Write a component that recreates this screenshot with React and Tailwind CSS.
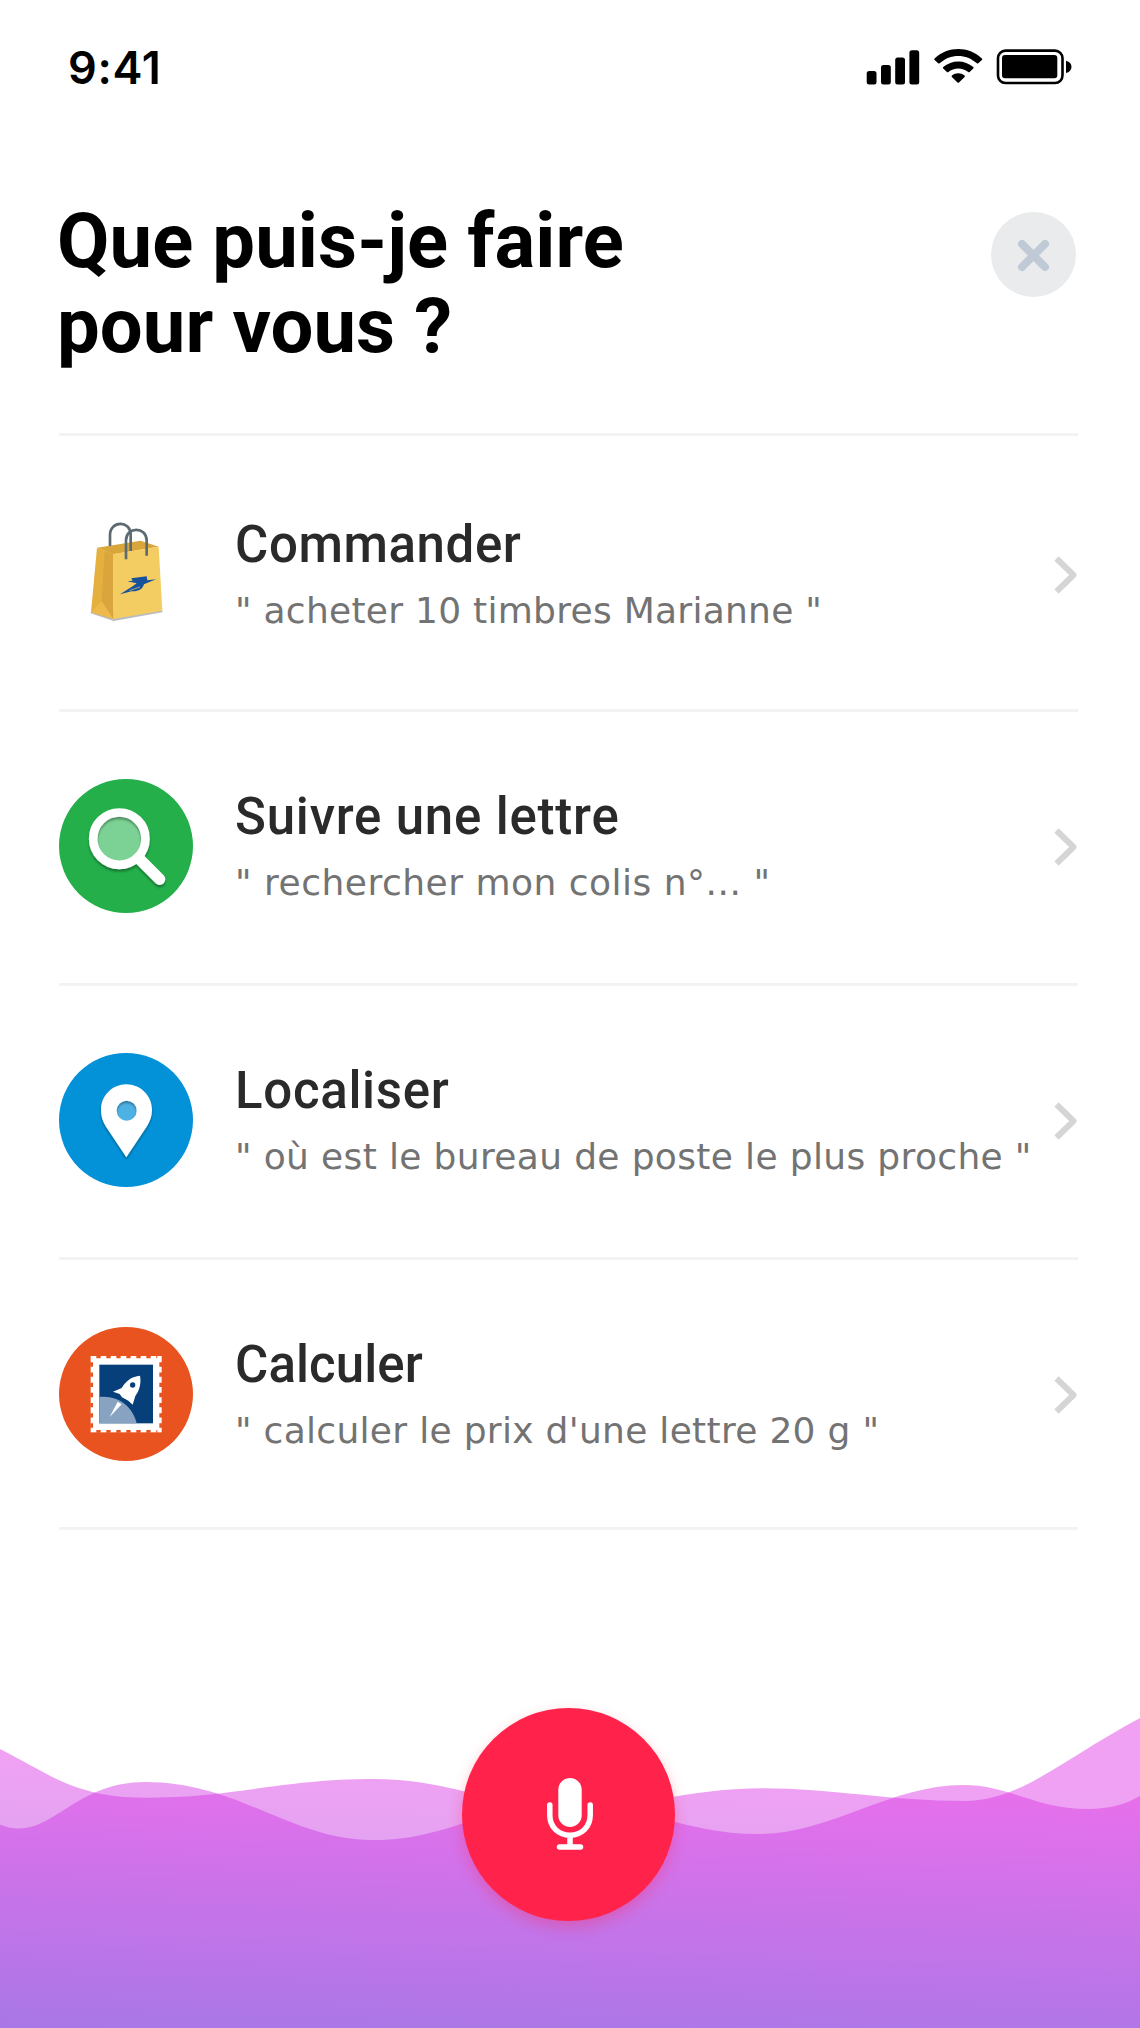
function BagIcon() {
  return (
    <svg viewBox="27 48 402 402" className="w-[134px] h-[134px] shrink-0" fill="none">
      <path d="M122 367L191 390L337 364V358L122 362Z" fill="#b9bcc0" />
      <path d="M141 170L272 149L326 167L190 190Z" fill="#d9a63c" />
      <path d="M180 165V132C180 88 242 88 242 130V180" stroke="#5c6a72" strokeWidth="8" />
      <path d="M141 170L190 189V384L123 364Z" fill="#e6b03f" />
      <path d="M164 180L190 189V384L155 331Z" fill="#d9a53c" />
      <path d="M123 364L155 331L190 384Z" fill="#ecb94a" />
      <path d="M190 189L326 167L337 359L190 384Z" fill="#f3cc62" />
      <path d="M228 205V148C228 106 290 106 290 148V194" stroke="#5c6a72" strokeWidth="8" />
      <path d="M244 262L290 256L292 268L318 265L282 280C278 294 266 302 245 301L210 310L248 286L260 277L232 271L248 269Z" fill="#17529b" />
      <path d="M238 299L270 288" stroke="#f3cc62" strokeWidth="2" />
    </svg>
  );
}

function SearchIcon() {
  return (
    <svg viewBox="27 27 402 402" className="w-[134px] h-[134px] shrink-0" fill="none">
      <defs>
        <filter id="lens-shadow" x="-20%" y="-20%" width="140%" height="140%">
          <feDropShadow dx="0" dy="7" stdDeviation="3" floodColor="#000" floodOpacity="0.35" />
        </filter>
      </defs>
      <circle cx="228" cy="228" r="201" fill="#24af4b" />
      <circle cx="208" cy="206" r="70" fill="#7cd295" />
      <g filter="url(#lens-shadow)" stroke="#fff">
        <circle cx="208" cy="206" r="78.5" strokeWidth="26" />
        <path d="M266 265L329 328" strokeWidth="34" strokeLinecap="round" />
      </g>
    </svg>
  );
}

function PinIcon() {
  return (
    <svg viewBox="27 38 402 402" className="w-[134px] h-[134px] shrink-0" fill="none">
      <defs>
        <filter id="pin-shadow" x="-20%" y="-20%" width="140%" height="140%">
          <feDropShadow dx="0" dy="6" stdDeviation="3" floodColor="#000" floodOpacity="0.35" />
        </filter>
      </defs>
      <circle cx="228" cy="239" r="201" fill="#0391d8" />
      <circle cx="230" cy="211" r="32" fill="#4db2e3" />
      <path
        filter="url(#pin-shadow)"
        fillRule="evenodd"
        fill="#fff"
        d="M229 132C271 132 306 166 306 208C306 228 300 243 290 259L229 351L168 259C158 243 153 228 153 208C153 166 187 132 229 132ZM230 181A30 30 0 1 0 230 241A30 30 0 1 0 230 181Z"
      />
    </svg>
  );
}

function StampIcon() {
  return (
    <svg viewBox="27 18 402 402" className="w-[134px] h-[134px] shrink-0" fill="none">
      <circle cx="228" cy="219" r="201" fill="#e8531f" />
      <rect x="122" y="105" width="213" height="229" fill="#fff" />
      {/* perforations */}
      <path d="M139 108H322M139 331H322" stroke="#e8531f" strokeWidth="8" strokeDasharray="13 17" />
      <path d="M125 124V322M332 124V322" stroke="#e8531f" strokeWidth="8" strokeDasharray="13 17.5" />
      <rect x="148" y="131" width="161" height="176" fill="#063f7a" />
      <path d="M148 228C205 222 248 257 260 307H148Z" fill="#88a3c2" />
      <path d="M270 164C245 166 228 180 215 201L189 212L209 219L216 229L235 239L248 251L256 225C269 207 274 186 270 164Z" fill="#fff" />
      <path d="M203 242L215 250L179 288Z" fill="#fff" />
      <circle cx="248" cy="192" r="8" fill="#063f7a" />
    </svg>
  );
}

const ACTIONS = [
  {
    title: "Commander",
    hint: '" acheter 10 timbres Marianne "',
    Icon: BagIcon,
    row: "h-[276px] pt-[71px]",
    titleClass: "tracking-[0.6px]",
    hintClass: "tracking-[0.27px]",
  },
  {
    title: "Suivre une lettre",
    hint: '" rechercher mon colis n°... "',
    Icon: SearchIcon,
    row: "h-[274px] pt-[67px]",
    titleClass: "tracking-[0.8px]",
    hintClass: "tracking-[0.5px]",
  },
  {
    title: "Localiser",
    hint: '" où est le bureau de poste le plus proche "',
    Icon: PinIcon,
    row: "h-[274px] pt-[67px]",
    titleClass: "tracking-[0.7px]",
    hintClass: "tracking-[0.35px]",
  },
  {
    title: "Calculer",
    hint: '" calculer le prix d\'une lettre 20 g "',
    Icon: StampIcon,
    row: "h-[270px] pt-[67px]",
    titleClass: "tracking-[0.1px]",
    hintClass: "tracking-[0.3px]",
  },
];

function StatusBar() {
  return (
    <div className="h-[134px] pl-[68px] pr-[68px] flex items-center justify-between">
      <span className="font-['Inter',sans-serif] font-semibold text-[45px] leading-none tracking-[0.7px]">9:41</span>
      <svg width="206" height="36" viewBox="866 49 206 36">
        <rect x="866.7" y="71" width="9.8" height="13.5" rx="2.5" />
        <rect x="881" y="65" width="9.8" height="19.5" rx="2.5" />
        <rect x="895.2" y="57.6" width="9.8" height="26.9" rx="2.5" />
        <rect x="909.4" y="50.3" width="9.8" height="34.2" rx="2.5" />
        <path d="M934.6 58.4C948 45.9 968.5 45.9 981.9 58.4C982.3 58.8 982.3 59.5 981.9 59.9L978.3 63.3C977.9 63.7 977.3 63.7 976.9 63.3C966.1 53.5 950.4 53.5 939.6 63.3C939.2 63.7 938.6 63.7 938.2 63.3L934.6 59.9C934.2 59.5 934.2 58.8 934.6 58.4Z" />
        <path d="M943.2 67.1C951.7 59.5 964.8 59.5 973.3 67.1C973.7 67.5 973.7 68.1 973.3 68.5L969.6 72C969.2 72.4 968.6 72.4 968.2 72C962.5 67.2 954 67.2 948.3 72C947.9 72.4 947.3 72.4 946.9 72L943.2 68.5C942.8 68.1 942.8 67.5 943.2 67.1Z" />
        <path d="M951.9 75.6C955.7 72.6 960.8 72.6 964.6 75.6C965 76 965 76.7 964.6 77.1L959 82.5C958.6 82.9 957.9 82.9 957.5 82.5L951.9 77.1C951.5 76.7 951.5 76 951.9 75.6Z" />
        <rect x="998" y="50.6" width="64.5" height="32.4" rx="7.5" fill="none" stroke="#000" strokeWidth="2.6" />
        <rect x="1002" y="55" width="55.3" height="23.3" rx="3" />
        <path d="M1066 60.8C1069.5 61.8 1071.5 64 1071.5 67C1071.5 70 1069.5 72.2 1066 73Z" />
      </svg>
    </div>
  );
}

function Header() {
  return (
    <header className="h-[299px] ml-[57px] mr-[64px] pt-[65px] flex items-start justify-between">
      <h1 className="font-['Roboto',sans-serif] font-bold text-[76px] leading-[85px] tracking-[0.1px] whitespace-nowrap">
        Que puis-je faire
        <br />
        pour vous ?
      </h1>
      <button
        aria-label="Fermer"
        className="mt-[13px] w-[85px] h-[85px] rounded-full bg-[#e9ebed] flex items-center justify-center"
      >
        <svg width="33" height="33" viewBox="0 0 33 33" className="mt-0.5" stroke="#bfcad6" strokeWidth="8" strokeLinecap="round">
          <path d="M5 5L28 28M28 5L5 28" />
        </svg>
      </button>
    </header>
  );
}

function ActionRow({ title, hint, Icon, row, titleClass, hintClass }) {
  return (
    <li className={`${row} border-t-[3px] border-[#f3f3f4] flex items-start`}>
      <Icon />
      <div className="mt-[5px] ml-[42px] flex-1 whitespace-nowrap">
        <h2 className={`${titleClass} font-['Roboto',sans-serif] font-medium text-[51px] leading-[66px] text-[#2a2a2a]`}>
          {title}
        </h2>
        <p className={`${hintClass} font-['DejaVu_Sans',sans-serif] text-[36px] leading-[66px] text-[#737373]`}>{hint}</p>
      </div>
      <svg
        width="24"
        height="38"
        viewBox="0 0 24 38"
        className="mt-[49px]"
        fill="none"
        stroke="#d5d5d5"
        strokeWidth="6"
        strokeLinejoin="round"
      >
        <path d="M2.5 2.5L19.5 19L2.5 35.5" />
      </svg>
    </li>
  );
}

function VoiceFooter() {
  return (
    <footer className="relative h-[348px]">
      <svg width="1140" height="348" viewBox="0 0 1140 348">
        <defs>
          <linearGradient id="wave" gradientUnits="userSpaceOnUse" x1="581" y1="88" x2="571" y2="370">
            <stop offset="0" stopColor="#e137e5" />
            <stop offset="1" stopColor="#8642dc" />
          </linearGradient>
        </defs>
        <g fill="url(#wave)" fillOpacity="0.47">
          <path d="M0 69C50 94 75 117.7 145 117.7C235 117.7 280 99 375 99C455 99 500 130 570 130C640 130 680 108.3 764 108.3C830 108.3 890 121 965 121C1020 121 1060 81 1140 38V348H0Z" />
          <path d="M0 144.5C6 147 12 148.5 19 148.5C56 148.5 80 102 145 102C240 102 290 160 373 160C450 160 490 122 570 122C640 122 680 154 759 154C830 154 890 105 963 105C1010 105 1035 129 1088 129C1110 129 1126 124 1140 116V348H0Z" />
        </g>
      </svg>
      <button
        aria-label="Parler"
        className="absolute left-[462px] top-7 w-[213px] h-[213px] rounded-full bg-[#ff234b] shadow-[0_6px_14px_rgba(255,35,75,0.3)] flex items-center justify-center"
      >
        <svg width="46" height="73" viewBox="0 0 46 73" className="ml-[3px]" fill="none" stroke="#fff" strokeWidth="5.5" strokeLinecap="round">
          <rect x="11.3" y="0" width="23.4" height="49" rx="11.7" fill="#fff" stroke="none" />
          <path d="M2.8 27V37C2.8 49 11.5 57.2 23 57.2C34.5 57.2 43.2 49 43.2 37V27M23 58V67M12.5 69H33.5" />
        </svg>
      </button>
    </footer>
  );
}

export default function App() {
  return (
    <main className="w-[1140px] h-[2028px] bg-white text-black flex flex-col overflow-hidden">
      <StatusBar />
      <Header />
      <ul className="ml-[59px] mr-[62px] border-b-[3px] border-[#f3f3f4]">
        {ACTIONS.map((action) => (
          <ActionRow key={action.title} {...action} />
        ))}
      </ul>
      <div className="mt-auto">
        <VoiceFooter />
      </div>
    </main>
  );
}
